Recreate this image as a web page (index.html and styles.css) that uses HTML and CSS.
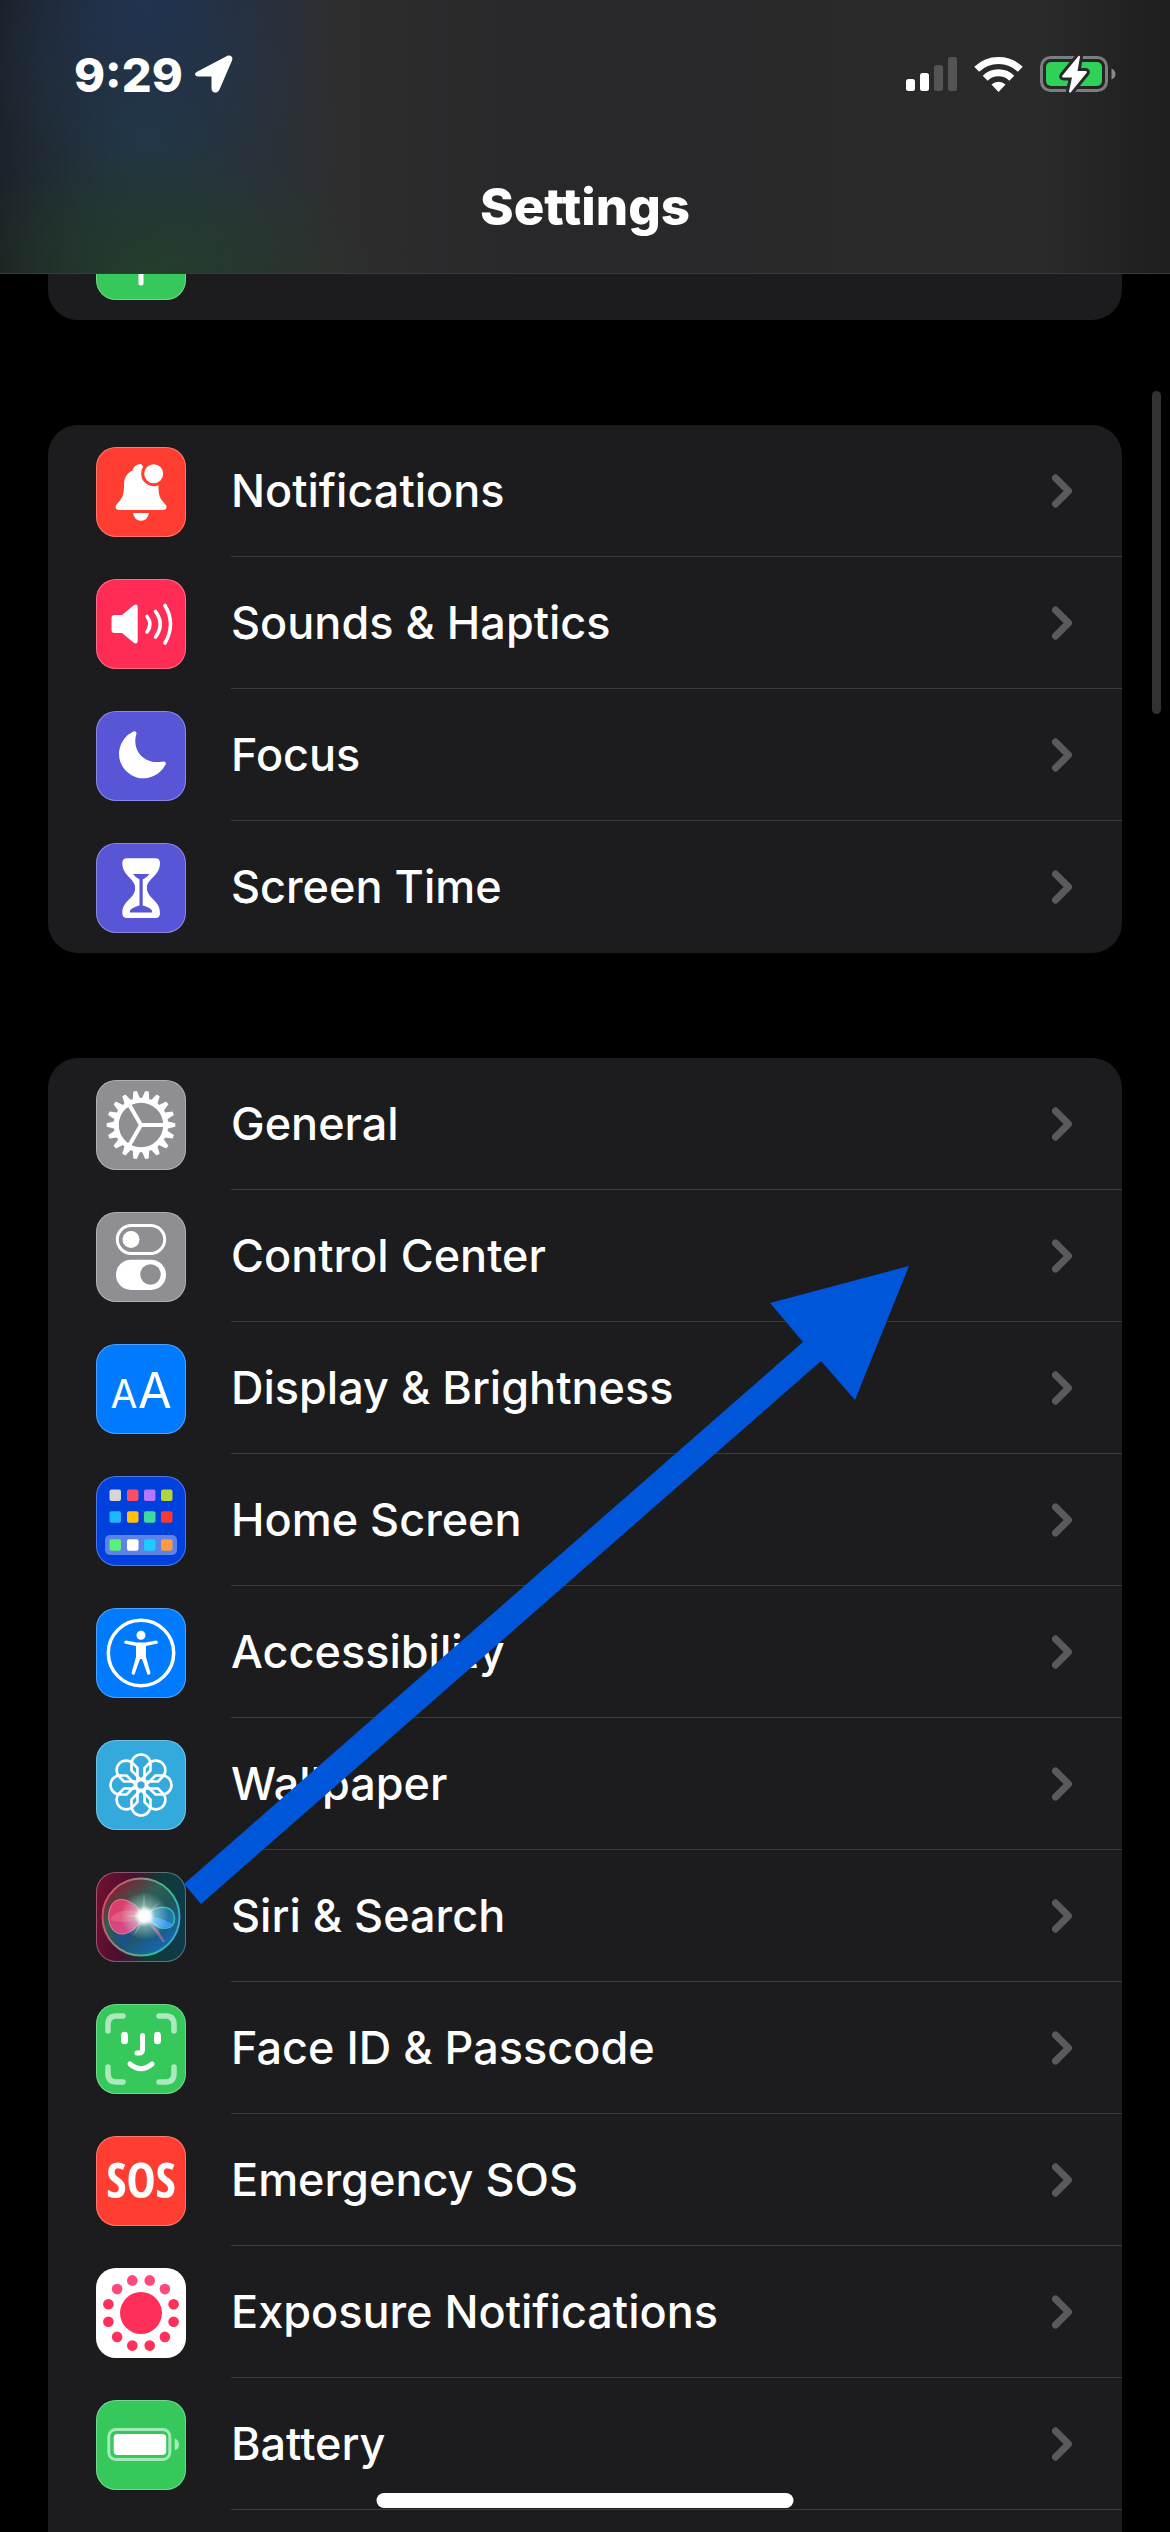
FILE: index.html
```html
<!DOCTYPE html>
<html lang="en">

<head>
    <meta charset="UTF-8">
    <meta name="viewport" content="width=device-width, initial-scale=1.0">
    <title>Settings</title>
    <link rel="stylesheet" href="styles.css">
</head>

<body>
    <!-- shared chevron -->
    <svg class="defs" aria-hidden="true">
        <symbol id="chevron" viewBox="0 0 20 34">
            <path d="M3.5 4 16.5 17 3.5 30" fill="none" stroke="#5a5a5e" stroke-width="7" stroke-linecap="round" stroke-linejoin="round" />
        </symbol>
    </svg>

    <div class="screen">
        <header class="header">
            <div class="status">
                <div class="status-left">
                    <span class="time">9:29</span>
                    <svg class="location" viewBox="0 0 38 38">
                        <path d="M2.500 16.500 32 1c3.500-1.600 6.500 1 5 4.500L24.500 34.500c-1.800 4.500-8 4-8-1V21.500H5c-5.500 0-6.500-3-2.500-5z" fill="#fff" />
                    </svg>
                </div>
                <div class="status-right">
                    <svg class="signal" viewBox="0 0 51 36">
                        <rect x="0" y="23" width="9" height="12" rx="2.500" fill="#fff" />
                        <rect x="14" y="17" width="9" height="18" rx="2.500" fill="#fff" />
                        <rect x="28" y="9" width="9" height="26" rx="2.500" fill="#545456" />
                        <rect x="42" y="1" width="9" height="34" rx="2.500" fill="#545456" />
                    </svg>
                    <svg class="wifi" viewBox="0 0 49 36">
                        <path d="M24.500 36 17.500 28.600a10 10 0 0 1 14 0z" fill="#fff" />
                        <path d="M11.200 22.300a19 19 0 0 1 26.600 0M2.700 13.300a31.500 31.500 0 0 1 43.600 0" fill="none" stroke="#fff" stroke-width="7" />
                    </svg>
                    <svg class="battery" viewBox="0 0 76 40">
                        <rect x="1.500" y="3.500" width="65" height="33" rx="9" fill="none" stroke="#7d7d7f" stroke-width="3" />
                        <path d="M71.500 14.500q4 2 4 5.500t-4 5.500z" fill="#8a8a8c" />
                        <rect x="6" y="8" width="56" height="24" rx="5" fill="#30d158" />
                        <path d="M38.500 2 22.500 21.500q-1 2 1 2H32L29 37.500q.5 2 2 .5L46.500 19q1-2-1-2H37.500L40 3q-.3-1.800-1.500-1z" fill="#fff" stroke="#29292b" stroke-width="6" stroke-linejoin="round" paint-order="stroke" />
                    </svg>
                </div>
            </div>
            <h1 class="title">Settings</h1>
        </header>

        <main class="list">
            <div class="group group-cut">
                <a class="row" href="#">
                    <svg class="icon green" viewBox="0 0 90 90">
                        <path d="M45 20V73" fill="none" stroke="#fff" stroke-width="5" stroke-linecap="round" />
                    </svg>
                    <span class="body"></span>
                </a>
            </div>

            <div class="group">
                <a class="row" href="#">
                    <svg class="icon red" viewBox="0 0 90 90">
                        <path d="M45 17c-5 0-7.500 3-8.500 6.500-6 2.500-8.500 8-8.500 15 0 8-1.500 12-4 15-2.500 3-4.500 4.500-4.500 6.500s1.500 3 4 3h43c2.500 0 4-1 4-3s-2-3.500-4.500-6.500c-2.500-3-3.500-7-3.500-15z" fill="#fff" />
                        <circle cx="57.700" cy="26.700" r="12.500" fill="#ff3d30" />
                        <circle cx="57.700" cy="26.700" r="9.500" fill="#fff" />
                        <path d="M37 66h16q-1.500 7.700-8 7.700T37 66z" fill="#fff" />
                    </svg>
                    <span class="body"><span class="label">Notifications</span><svg class="chevron"><use href="#chevron" /></svg></span>
                </a>
                <a class="row" href="#">
                    <svg class="icon pink" viewBox="0 0 90 90">
                        <path d="M18.500 36H26L37.500 26.500q4-2.500 4.200 1.500V62q-.2 4-4.200 1.500L26 54H18.500q-3 0-3-3V39q0-3 3-3z" fill="#fff" />
                        <path d="M51 37.500Q57 45 51 53M59.500 32.500Q69 45 59.500 58M69 26.500Q80 45 69 64" fill="none" stroke="#fff" stroke-width="3.600" stroke-linecap="round" />
                    </svg>
                    <span class="body"><span class="label">Sounds &amp; Haptics</span><svg class="chevron"><use href="#chevron" /></svg></span>
                </a>
                <a class="row" href="#">
                    <svg class="icon indigo" viewBox="0 0 90 90">
                        <path d="M37.500 20.500c1.800-.8 3.400.4 2.900 2.500C35.500 38 47 54.500 67 50.500c2-.3 3.300 1 2.700 2.800A24.500 24.500 0 1 1 37.500 20.500z" fill="#fff" />
                    </svg>
                    <span class="body"><span class="label">Focus</span><svg class="chevron"><use href="#chevron" /></svg></span>
                </a>
                <a class="row" href="#">
                    <svg class="icon indigo" viewBox="0 0 90 90">
                        <path d="M31 15.300H59.500Q64 15.300 64 20C64 32 53 35 51 43V47C53 56 64 58 64 70Q64 75 59.500 75H31Q26.300 75 26.300 70C26.300 58 37.500 56 39 47V43C37.500 35 26.300 32 26.300 20Q26.300 15.300 31 15.300z" fill="#fff" />
                        <path d="M37 31H53.500Q51 34.500 46.700 36.500V62.500Q54 64.500 56 67.500V69.500H34V67.500Q36 64.500 43.500 62.500V36.500Q39.500 34.500 37 31z" fill="#5856d6" />
                    </svg>
                    <span class="body"><span class="label">Screen Time</span><svg class="chevron"><use href="#chevron" /></svg></span>
                </a>
            </div>

            <div class="group group-last">
                <a class="row" href="#">
                    <svg class="icon gray" viewBox="0 0 90 90">
                        <defs>
                            <path id="tooth" d="M70 41 79.300 43.200V46.800L70 49z" />
                            <g id="teeth">
                                <use href="#tooth" />
                                <use href="#tooth" transform="rotate(20 45 45)" />
                                <use href="#tooth" transform="rotate(40 45 45)" />
                            </g>
                        </defs>
                        <g fill="#fff">
                            <use href="#teeth" />
                            <use href="#teeth" transform="rotate(60 45 45)" />
                            <use href="#teeth" transform="rotate(120 45 45)" />
                            <use href="#teeth" transform="rotate(180 45 45)" />
                            <use href="#teeth" transform="rotate(240 45 45)" />
                            <use href="#teeth" transform="rotate(300 45 45)" />
                        </g>
                        <circle cx="45" cy="45" r="24.700" fill="none" stroke="#fff" stroke-width="5" />
                        <path d="M45 45H69M45 45 33 24.200M45 45 33 65.800" stroke="#fff" stroke-width="4" />
                    </svg>
                    <span class="body"><span class="label">General</span><svg class="chevron"><use href="#chevron" /></svg></span>
                </a>
                <a class="row" href="#">
                    <svg class="icon gray" viewBox="0 0 90 90">
                        <rect x="21.300" y="13.500" width="47.400" height="28" rx="14" fill="none" stroke="#fff" stroke-width="3" />
                        <circle cx="35" cy="27.500" r="8.500" fill="#fff" />
                        <rect x="20" y="47.700" width="50" height="30.300" rx="15" fill="#fff" />
                        <circle cx="54.500" cy="62.500" r="10.300" fill="#8e8e93" />
                    </svg>
                    <span class="body"><span class="label">Control Center</span><svg class="chevron"><use href="#chevron" /></svg></span>
                </a>
                <a class="row" href="#">
                    <svg class="icon blue" viewBox="0 0 90 90">
                        <text class="aa" x="28" y="64" font-size="39">A</text>
                        <text class="aa" x="59" y="64" font-size="49">A</text>
                    </svg>
                    <span class="body"><span class="label">Display &amp; Brightness</span><svg class="chevron"><use href="#chevron" /></svg></span>
                </a>
                <a class="row" href="#">
                    <svg class="icon navy" viewBox="0 0 90 90">
                        <rect x="9" y="59" width="72" height="20" rx="5" fill="#5e83e8" />
                        <rect x="13.500" y="13.500" width="11.500" height="11.500" rx="2" fill="#d6d6d2" />
                        <rect x="31" y="13.500" width="11.500" height="11.500" rx="2" fill="#fb4e69" />
                        <rect x="48" y="13.500" width="11.500" height="11.500" rx="2" fill="#b477fd" />
                        <rect x="65" y="13.500" width="11.500" height="11.500" rx="2" fill="#b0d43c" />
                        <rect x="13.500" y="35.300" width="11.500" height="11.500" rx="2" fill="#1cb8fc" />
                        <rect x="31" y="35.300" width="11.500" height="11.500" rx="2" fill="#fdc10c" />
                        <rect x="48" y="35.300" width="11.500" height="11.500" rx="2" fill="#3fd9a2" />
                        <rect x="65" y="35.300" width="11.500" height="11.500" rx="2" fill="#f93a32" />
                        <rect x="13.500" y="63.300" width="11.500" height="11.500" rx="2" fill="#5af07a" />
                        <rect x="31" y="63.300" width="11.500" height="11.500" rx="2" fill="#ffffff" />
                        <rect x="48" y="63.300" width="11.500" height="11.500" rx="2" fill="#1ccbff" />
                        <rect x="65" y="63.300" width="11.500" height="11.500" rx="2" fill="#ff9a40" />
                    </svg>
                    <span class="body"><span class="label">Home Screen</span><svg class="chevron"><use href="#chevron" /></svg></span>
                </a>
                <a class="row" href="#">
                    <svg class="icon blue" viewBox="0 0 90 90">
                        <circle cx="45" cy="45" r="32.700" fill="none" stroke="#fff" stroke-width="3.500" />
                        <circle cx="45" cy="27.300" r="4.500" fill="#fff" />
                        <path d="M30 32.500 41 34.500H49L60 32.500Q62.500 33 61.500 35.500L50 38V49L54.500 65Q54 67.500 51.500 66.500L46 51H44L38.500 66.500Q36 67.500 35.500 65L40 49V38L28.500 35.500Q27.500 33 30 32.500z" fill="#fff" />
                    </svg>
                    <span class="body"><span class="label">Accessibility</span><svg class="chevron"><use href="#chevron" /></svg></span>
                </a>
                <a class="row" href="#">
                    <svg class="icon sky" viewBox="0 0 90 90">
                        <defs>
                            <path id="petal" d="M45 40 35.500 30.500V24a9.500 9.500 0 0 1 19 0V30.500z" />
                        </defs>
                        <g fill="none" stroke="#fff" stroke-width="2.600" stroke-linejoin="round">
                            <use href="#petal" />
                            <use href="#petal" transform="rotate(45 45 45)" />
                            <use href="#petal" transform="rotate(90 45 45)" />
                            <use href="#petal" transform="rotate(135 45 45)" />
                            <use href="#petal" transform="rotate(180 45 45)" />
                            <use href="#petal" transform="rotate(225 45 45)" />
                            <use href="#petal" transform="rotate(270 45 45)" />
                            <use href="#petal" transform="rotate(315 45 45)" />
                            <circle cx="45" cy="45" r="5" />
                        </g>
                    </svg>
                    <span class="body"><span class="label">Wallpaper</span><svg class="chevron"><use href="#chevron" /></svg></span>
                </a>
                <a class="row" href="#">
                    <svg class="icon siri" viewBox="0 0 90 90">
                        <defs>
                            <linearGradient id="ring" x1="0" y1="0.300" x2="1" y2="0.600">
                                <stop offset="0" stop-color="#d8485c" />
                                <stop offset="0.400" stop-color="#8c8f86" />
                                <stop offset="0.750" stop-color="#2fbf8d" />
                                <stop offset="1" stop-color="#3fa6c8" />
                            </linearGradient>
                            <linearGradient id="orb" x1="0.100" y1="0.200" x2="0.700" y2="1">
                                <stop offset="0" stop-color="#7a2638" />
                                <stop offset="0.300" stop-color="#2f5e54" />
                                <stop offset="0.600" stop-color="#1f5560" />
                                <stop offset="1" stop-color="#1668b8" />
                            </linearGradient>
                            <linearGradient id="lobe" x1="0" y1="0" x2="0.600" y2="1">
                                <stop offset="0" stop-color="#e03a62" />
                                <stop offset="1" stop-color="#d04d90" />
                            </linearGradient>
                            <radialGradient id="glow">
                                <stop offset="0" stop-color="#fff" />
                                <stop offset="0.250" stop-color="#fff" stop-opacity="0.950" />
                                <stop offset="0.450" stop-color="#d8fff4" stop-opacity="0.450" />
                                <stop offset="1" stop-color="#d8fff4" stop-opacity="0" />
                            </radialGradient>
                        </defs>
                        <circle cx="45" cy="45" r="38.500" fill="url(#orb)" stroke="url(#ring)" stroke-width="2" />
                        <path d="M16 60Q26 70 48 44L30 76Q18 70 16 60z" fill="#1c4f9c" opacity="0.600" />
                        <path d="M48 44 62 60 68 70z" fill="#c76a92" stroke="#c76a92" stroke-width="2" opacity="0.700" />
                        <path d="M48 44C38 29 26 24 18 30 11 37 11 51 17 58 25 66 38 62 48 44z" fill="url(#lobe)" stroke="#f27a98" stroke-width="1" />
                        <path d="M14 48C20 36 38 36 48 44 36 52 22 50 14 48z" fill="#f07a90" opacity="0.450" />
                        <path d="M48 44C60 34 68 34 74 37 80 42 80 52 74 55 66 59 58 54 48 44z" fill="#2379a8" stroke="#37b8b8" stroke-width="1.500" />
                        <path d="M48 44C58 44 66 46 76 52 70 59 60 57 48 44z" fill="#3a9cf0" />
                        <path d="M48 20 50 40 64 30 52 44 64 56 49 48 38 64 45 46 30 44 45 42 36 28 46 40z" fill="#fff" opacity="0.250" />
                        <circle cx="48.500" cy="44" r="24" fill="url(#glow)" />
                    </svg>
                    <span class="body"><span class="label">Siri &amp; Search</span><svg class="chevron"><use href="#chevron" /></svg></span>
                </a>
                <a class="row" href="#">
                    <svg class="icon green" viewBox="0 0 90 90">
                        <g fill="none" stroke="#fff" stroke-width="5.500" stroke-linecap="round">
                            <path d="M12 27V20.500Q12 12 20.500 12H27M63 12H69.500Q78 12 78 20.500V27M78 63V69.500Q78 78 69.500 78H63M27 78H20.500Q12 78 12 69.500V63" opacity="0.600" />
                            <path d="M28.500 31.300V36.700M61.500 31.300V36.700" stroke-width="7" />
                            <path d="M46.500 31.500V45.500Q46.500 49 43 49H41M34 60Q45 69.500 56 60" stroke-width="5" />
                        </g>
                    </svg>
                    <span class="body"><span class="label">Face ID &amp; Passcode</span><svg class="chevron"><use href="#chevron" /></svg></span>
                </a>
                <a class="row" href="#">
                    <svg class="icon red" viewBox="0 0 90 90">
                        <text class="sos" x="45" y="62">SOS</text>
                    </svg>
                    <span class="body"><span class="label">Emergency SOS</span><svg class="chevron"><use href="#chevron" /></svg></span>
                </a>
                <a class="row" href="#">
                    <svg class="icon white" viewBox="0 0 90 90">
                        <circle cx="45" cy="45" r="21" fill="#fe3059" />
                        <g fill="#fd4a7c">
                            <circle cx="36.300" cy="12.400" r="5.300" />
                            <circle cx="53.700" cy="12.400" r="5.300" />
                            <circle cx="21.100" cy="21.100" r="5.300" />
                            <circle cx="68.900" cy="21.100" r="5.300" />
                        </g>
                        <g fill="#fe3059">
                            <circle cx="12.400" cy="36.300" r="5.300" />
                            <circle cx="77.600" cy="36.300" r="5.300" />
                            <circle cx="12.400" cy="53.700" r="5.300" />
                            <circle cx="77.600" cy="53.700" r="5.300" />
                            <circle cx="21.100" cy="68.900" r="5.300" />
                            <circle cx="68.900" cy="68.900" r="5.300" />
                            <circle cx="36.300" cy="77.600" r="5.300" />
                            <circle cx="53.700" cy="77.600" r="5.300" />
                        </g>
                    </svg>
                    <span class="body"><span class="label">Exposure Notifications</span><svg class="chevron"><use href="#chevron" /></svg></span>
                </a>
                <a class="row" href="#">
                    <svg class="icon green" viewBox="0 0 90 90">
                        <rect x="12.800" y="29.500" width="61" height="30" rx="7" fill="none" stroke="#a6e9b8" stroke-width="3" />
                        <rect x="17.700" y="34" width="52.500" height="21" rx="4" fill="#fff" />
                        <path d="M78.700 38.500q4.300 1.500 4.300 6t-4.300 6z" fill="#a6e9b8" />
                    </svg>
                    <span class="body"><span class="label">Battery</span><svg class="chevron"><use href="#chevron" /></svg></span>
                </a>

                <svg class="arrow" viewBox="0 0 726 638" aria-hidden="true">
                    <path d="M0 618 619 76 586 37 725 0 671 134 637 95 17 638z" fill="#0056d8" />
                </svg>
            </div>
        </main>

        <div class="scrollbar"></div>
        <div class="home-bar"></div>
    </div>
</body>

</html>
```
FILE: styles.css
```css
body {
    margin: 0;
    background: #000;
    color: #fff;
    font-family: Inter, "Liberation Sans", sans-serif;
}

.defs {
    display: none;
}

.screen {
    position: relative;
    display: flex;
    flex-direction: column;
    height: 100vh;
    overflow: hidden;
}

/* header */
.header {
    flex: none;
    border-bottom: 1px solid #3a3a3c;
    background:
        radial-gradient(ellipse 220px 130px at 150px 100%, rgba(36, 66, 42, 0.8), rgba(36, 66, 42, 0.4) 50%, transparent),
        radial-gradient(ellipse 200px 180px at 145px 0, rgba(33, 52, 84, 0.9), rgba(33, 52, 84, 0.4) 50%, transparent),
        radial-gradient(ellipse 200px 200px at 145px 50%, rgba(34, 60, 76, 0.8), rgba(34, 60, 76, 0.4) 50%, transparent),
        linear-gradient(to right, #1a1c20 0, #2b2c30 240px, #2e2e2f 320px, #28282a 540px, #2a2a2b 1040px, #1e1e1e 100%);
}

.status {
    display: flex;
    justify-content: space-between;
    padding: 46px 54px 0 74px;
}

.status-left,
.status-right {
    display: flex;
    align-items: center;
    height: 56px;
}

.status-left {
    gap: 12px;
}

.status-right {
    gap: 17px;
}

.time {
    font-size: 47px;
    font-weight: 800;
}

.location {
    width: 38px;
    height: 38px;
}

.signal {
    width: 51px;
    height: 36px;
}

.wifi {
    width: 49px;
    height: 36px;
}

.battery {
    width: 76px;
    height: 40px;
}

.title {
    margin: 0;
    padding: 75px 0 36px;
    font-size: 51px;
    font-weight: 800;
    line-height: 60px;
    text-align: center;
}

/* grouped list */
.list {
    display: flex;
    flex: 1;
    flex-direction: column;
    gap: 105px;
    min-height: 0;
    padding: 0 48px;
    overflow: hidden;
}

.group {
    position: relative;
    flex: none;
    border-radius: 30px;
    background: #1c1c1e;
}

/* first group is scrolled under the header */
.group-cut {
    margin-top: -86px;
}

/* last group runs past the bottom edge */
.group-last {
    flex: 1 0 auto;
    border-radius: 30px 30px 0 0;
}

.row {
    display: flex;
    gap: 45px;
    height: 132px;
    padding-left: 48px;
    color: inherit;
    text-decoration: none;
}

.body {
    display: flex;
    flex: 1;
    align-items: center;
    justify-content: space-between;
    padding-right: 50px;
    border-bottom: 1px solid #3a3a3c;
}

.group:not(.group-last) .row:last-of-type .body {
    border-bottom-color: transparent;
}

.label {
    font-size: 45px;
    font-weight: 500;
    line-height: 56px;
}

.chevron {
    width: 20px;
    height: 34px;
}

/* icons */
.icon {
    flex: none;
    width: 90px;
    height: 90px;
    margin-top: 22px;
    border-radius: 20px;
    box-shadow: inset 0 0 0 1px rgba(255, 255, 255, 0.3);
}

.red {
    background: #ff3d30;
}

.pink {
    background: #ff2d55;
}

.indigo {
    background: #5856d6;
}

.gray {
    background: #8e8e93;
}

.blue {
    background: #007aff;
}

.navy {
    background: #0040dd;
}

.sky {
    background: #34aadc;
}

.green {
    background: #36c85a;
}

.white {
    background: #fff;
}

.siri {
    background: linear-gradient(100deg, #780f30 0, #4a1030 35%, #0e3a38 65%, #0f3a50 100%);
}

.aa {
    fill: #fff;
    font-weight: 400;
    text-anchor: middle;
}

.sos {
    fill: #fff;
    font-family: "Liberation Sans Narrow", "Open Sans Condensed", Roboto, sans-serif;
    font-size: 49px;
    font-weight: 700;
    text-anchor: middle;
}

/* overlays */
.arrow {
    position: absolute;
    top: 208px;
    left: 136px;
    width: 726px;
    height: 638px;
    pointer-events: none;
}

.scrollbar {
    position: absolute;
    top: 391px;
    right: 9px;
    width: 9px;
    height: 323px;
    border-radius: 5px;
    background: #323232;
}

.home-bar {
    position: absolute;
    bottom: 24px;
    left: 50%;
    width: 417px;
    height: 15px;
    border-radius: 8px;
    background: #fff;
    transform: translateX(-50%);
}
```
